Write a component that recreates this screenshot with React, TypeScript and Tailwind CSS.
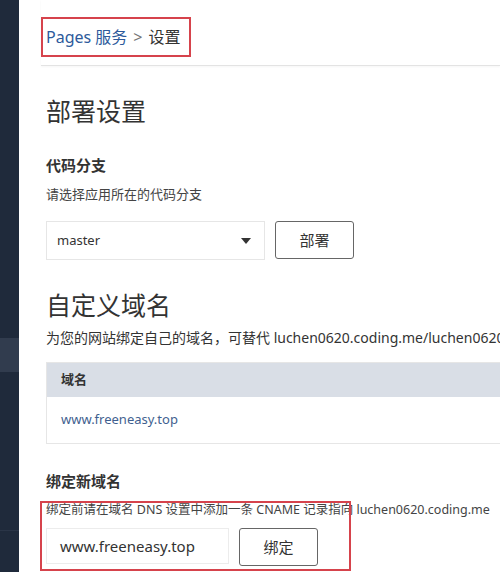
import React from "react";

const font = { fontFamily: '"Noto Sans", "Noto Sans CJK SC", sans-serif' };

export default function App() {
  return (
    <div className="flex h-[572px] w-[500px] overflow-hidden bg-white text-[#333]" style={font}>
      <aside className="flex w-[19px] shrink-0 flex-col bg-[#1f2a3b]">
        <div className="h-[338px]" />
        <div className="h-[34px] bg-[#313c4e]" />
        <div className="h-[158px]" />
        <div className="h-px bg-[#2a3547]" />
      </aside>
      <main className="relative min-w-0 flex-1 overflow-hidden">
        <header className="ml-[22px] h-[66px] border-b border-[#e3e3e3] pt-[17px] shadow-[0_1px_2px_rgba(0,0,0,0.04)]">
          <div className="flex h-[40px] w-[150px] items-center border-2 border-[#d6434c] pl-[3px] text-[16px] whitespace-nowrap">
            <span className="text-[#2d5a9b]">Pages 服务</span>
            <span className="mx-[6px] text-[#777]">&gt;</span>
            <span className="text-[#333]">设置</span>
          </div>
        </header>
        <div className="pl-[27px]">
          <h1 className="mt-[27px] text-[25px] leading-[36px] font-normal">部署设置</h1>
          <h2 className="mt-[25px] text-[15px] leading-[22px] font-bold">代码分支</h2>
          <p className="mt-[8px] text-[13px] leading-[20px] text-[#444]">请选择应用所在的代码分支</p>
          <div className="mt-[17px] flex items-start gap-[10px]">
            <div className="flex h-[39px] w-[219px] items-center justify-between border border-[#e6e6e6] pl-[10px] pr-[13px] text-[13px]">
              <span>master</span>
              <svg width="10" height="6" viewBox="0 0 10 6"><path d="M0 0h10L5 6z" fill="#333" /></svg>
            </div>
            <button className="flex h-[38px] w-[79px] items-center justify-center rounded-[3px] border border-[#666] text-[15px] text-[#333]">
              部署
            </button>
          </div>
          <h1 className="mt-[27px] text-[25px] leading-[36px] font-normal">自定义域名</h1>
          <p className="mt-[5px] whitespace-nowrap text-[14px] leading-[20px] text-[#333]">
            为您的网站绑定自己的域名，可替代 luchen0620.coding.me/luchen0620
          </p>
          <div className="mt-[14px] w-[470px] border border-[#e6e6e6]">
            <div className="flex h-[34px] items-center bg-[#d9dee6] pl-[14px] text-[13px] font-bold">域名</div>
            <div className="flex h-[46px] items-center pl-[14px] text-[13px] text-[#3f5f8f]">www.freeneasy.top</div>
          </div>
          <h2 className="mt-[26px] text-[15px] leading-[22px] font-bold">绑定新域名</h2>
          <div className="relative">
            <p className="mt-[9px] whitespace-nowrap text-[12.5px] leading-[18px] text-[#444]">
              绑定前请在域名 DNS 设置中添加一条 CNAME 记录指向 luchen0620.coding.me
            </p>
            <div className="mt-[9px] flex items-start gap-[10px]">
              <div className="flex h-[36px] w-[183px] items-center border border-[#ececec] pl-[13px] text-[15px]">
                www.freeneasy.top
              </div>
              <button className="flex h-[38px] w-[79px] items-center justify-center rounded-[3px] border border-[#666] text-[15px] text-[#333]">
                绑定
              </button>
            </div>
            <div className="pointer-events-none absolute -left-[6px] top-0 h-[70px] w-[311px] border-2 border-[#d6434c]" />
          </div>
        </div>
      </main>
    </div>
  );
}
